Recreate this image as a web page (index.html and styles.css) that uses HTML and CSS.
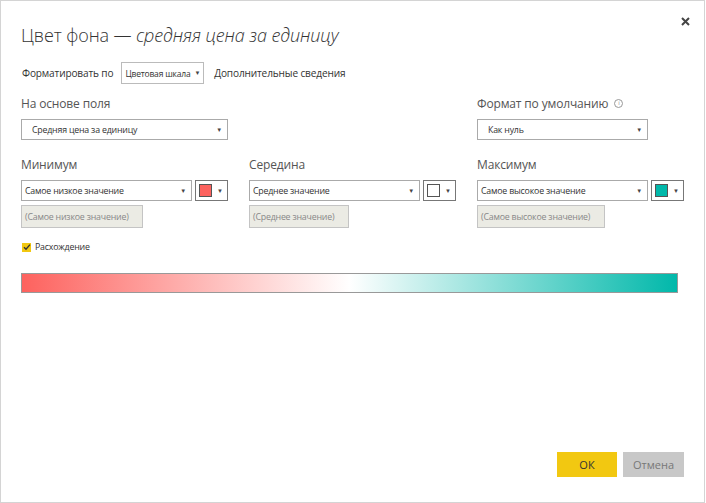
FILE: index.html
```html
<!DOCTYPE html>
<html lang="ru">
<head>
    <meta charset="UTF-8">
    <meta name="viewport" content="width=device-width, initial-scale=1.0">
    <title>Цвет фона</title>
    <link rel="stylesheet" href="styles.css">
</head>
<body>
    <div class="dialog">
        <button class="close">
            <svg width="9" height="9" viewBox="0 0 9 9"><path d="M1 1 L8 8 M8 1 L1 8" stroke="#444" stroke-width="2"/></svg>
        </button>
        <h1 class="title">Цвет фона — <i>средняя цена за единицу</i></h1>

        <div class="format-row">
            <span>Форматировать по</span>
            <div class="small-select">Цветовая шкала <span class="caret">&#9660;</span></div>
            <span>Дополнительные сведения</span>
        </div>

        <div class="grid">
            <div class="field">
                <div class="label">На основе поля</div>
                <div class="select">Средняя цена за единицу <span class="caret">&#9660;</span></div>
            </div>
            <div class="field"></div>
            <div class="field">
                <div class="label">Формат по умолчанию <span class="info">i</span></div>
                <div class="select short">Как нуль <span class="caret">&#9660;</span></div>
            </div>

            <div class="field">
                <div class="label">Минимум</div>
                <div class="pick">
                    <div class="select">Самое низкое значение <span class="caret">&#9660;</span></div>
                    <div class="swatch-btn"><span class="swatch red"></span><span class="caret">&#9660;</span></div>
                </div>
                <div class="disabled w1">(Самое низкое значение)</div>
            </div>
            <div class="field">
                <div class="label">Середина</div>
                <div class="pick">
                    <div class="select">Среднее значение <span class="caret">&#9660;</span></div>
                    <div class="swatch-btn"><span class="swatch white"></span><span class="caret">&#9660;</span></div>
                </div>
                <div class="disabled w2">(Среднее значение)</div>
            </div>
            <div class="field">
                <div class="label">Максимум</div>
                <div class="pick">
                    <div class="select">Самое высокое значение <span class="caret">&#9660;</span></div>
                    <div class="swatch-btn"><span class="swatch teal"></span><span class="caret">&#9660;</span></div>
                </div>
                <div class="disabled w3">(Самое высокое значение)</div>
            </div>
        </div>

        <label class="check">
            <span class="box">
                <svg width="8" height="8" viewBox="0 0 8 8"><path d="M1 4.2 L3 6.2 L7 1.6" fill="none" stroke="#333" stroke-width="1.4"/></svg>
            </span>
            Расхождение
        </label>

        <div class="gradient"></div>

        <div class="buttons">
            <button class="btn ok">ОК</button>
            <button class="btn cancel">Отмена</button>
        </div>
    </div>
</body>
</html>
```

FILE: styles.css
```css
*{
    margin: 0;
    padding: 0;
    box-sizing: border-box;
}
body{
    font-family: "Open Sans", "Noto Sans", sans-serif;
    color: #333;
    background: #fff;
}
.dialog{
    position: relative;
    width: 705px;
    height: 503px;
    border: 1px solid #d4d4d4;
    padding: 0 20px;
    display: flex;
    flex-direction: column;
}
.close{
    position: absolute;
    top: 16px;
    right: 14px;
    border: none;
    background: none;
    display: flex;
}
.title{
    margin-top: 22px;
    font-size: 18px;
    font-weight: 300;
    color: #333;
    letter-spacing: -0.1px;
}
.format-row{
    margin-top: 15px;
    display: flex;
    align-items: center;
    gap: 8px;
    font-size: 10.1px;
    letter-spacing: -0.15px;
    margin-left: 1px;
    white-space: nowrap;
}
.format-row span:last-child{
    margin-left: 2px;
}
.small-select{
    border: 1px solid #bbb;
    height: 22px;
    padding: 0 3px;
    display: flex;
    align-items: center;
    font-size: 8.5px;
    letter-spacing: -0.2px;
    gap: 2px;
}
.caret{
    font-size: 6px;
    color: #444;
}
.grid{
    margin-top: 8px;
    display: grid;
    grid-template-columns: 207px 207px 207px;
    column-gap: 21px;
    row-gap: 13px;
}
.label{
    font-size: 12px;
    letter-spacing: -0.15px;
    color: #555;
    height: 22px;
    display: flex;
    align-items: center;
    gap: 6px;
    margin-bottom: 5px;
}
.info{
    display: inline-flex;
    width: 9px;
    height: 9px;
    border: 1px solid #999;
    border-radius: 50%;
    font-size: 6px;
    color: #888;
    align-items: center;
    justify-content: center;
}
.select{
    height: 21px;
    border: 1px solid #aaa;
    display: flex;
    align-items: center;
    justify-content: space-between;
    font-size: 8.8px;
    letter-spacing: -0.2px;
    padding: 0 5px 0 10px;
    white-space: nowrap;
}
.short{
    width: 171px;
}
.pick{
    display: flex;
    gap: 3px;
}
.pick .select{
    flex: 1;
    padding-left: 3px;
}
.swatch-btn{
    width: 33px;
    height: 21px;
    border: 1px solid #777;
    display: flex;
    align-items: center;
    gap: 5px;
    padding-left: 3px;
}
.swatch{
    width: 13px;
    height: 13px;
    border: 1px solid #555;
}
.red{ background: #fd625e; }
.white{ background: #fff; }
.teal{ background: #01b8aa; }
.disabled{
    margin-top: 4px;
    height: 23px;
    background: #ebebe4;
    border: 1px solid #c4c4c4;
    font-size: 8.8px;
    letter-spacing: -0.2px;
    white-space: nowrap;
    color: #888;
    display: flex;
    align-items: center;
    padding-left: 3px;
}
.w1{ width: 122px; }
.w2{ width: 100px; }
.w3{ width: 128px; }
.check{
    margin-top: 13px;
    margin-left: 1px;
    display: flex;
    align-items: center;
    gap: 4px;
    font-size: 8.8px;
    letter-spacing: -0.2px;
}
.box{
    width: 9px;
    height: 9px;
    background: #f2c811;
    display: flex;
    align-items: center;
    justify-content: center;
}
.gradient{
    margin-top: 20px;
    width: 657px;
    height: 20px;
    border: 1px solid #999;
    background: linear-gradient(to right, #fd625e, #ffffff 50%, #01b8aa);
}
.buttons{
    margin-top: auto;
    margin-bottom: 25px;
    display: flex;
    justify-content: flex-end;
    gap: 6px;
}
.btn{
    height: 25px;
    border: none;
    font-family: "Open Sans", sans-serif;
    font-size: 11px;
}
.ok{
    width: 60px;
    background: #f2c811;
    color: #333;
}
.cancel{
    width: 61px;
    background: #c8c8c8;
    color: #777;
}
```
